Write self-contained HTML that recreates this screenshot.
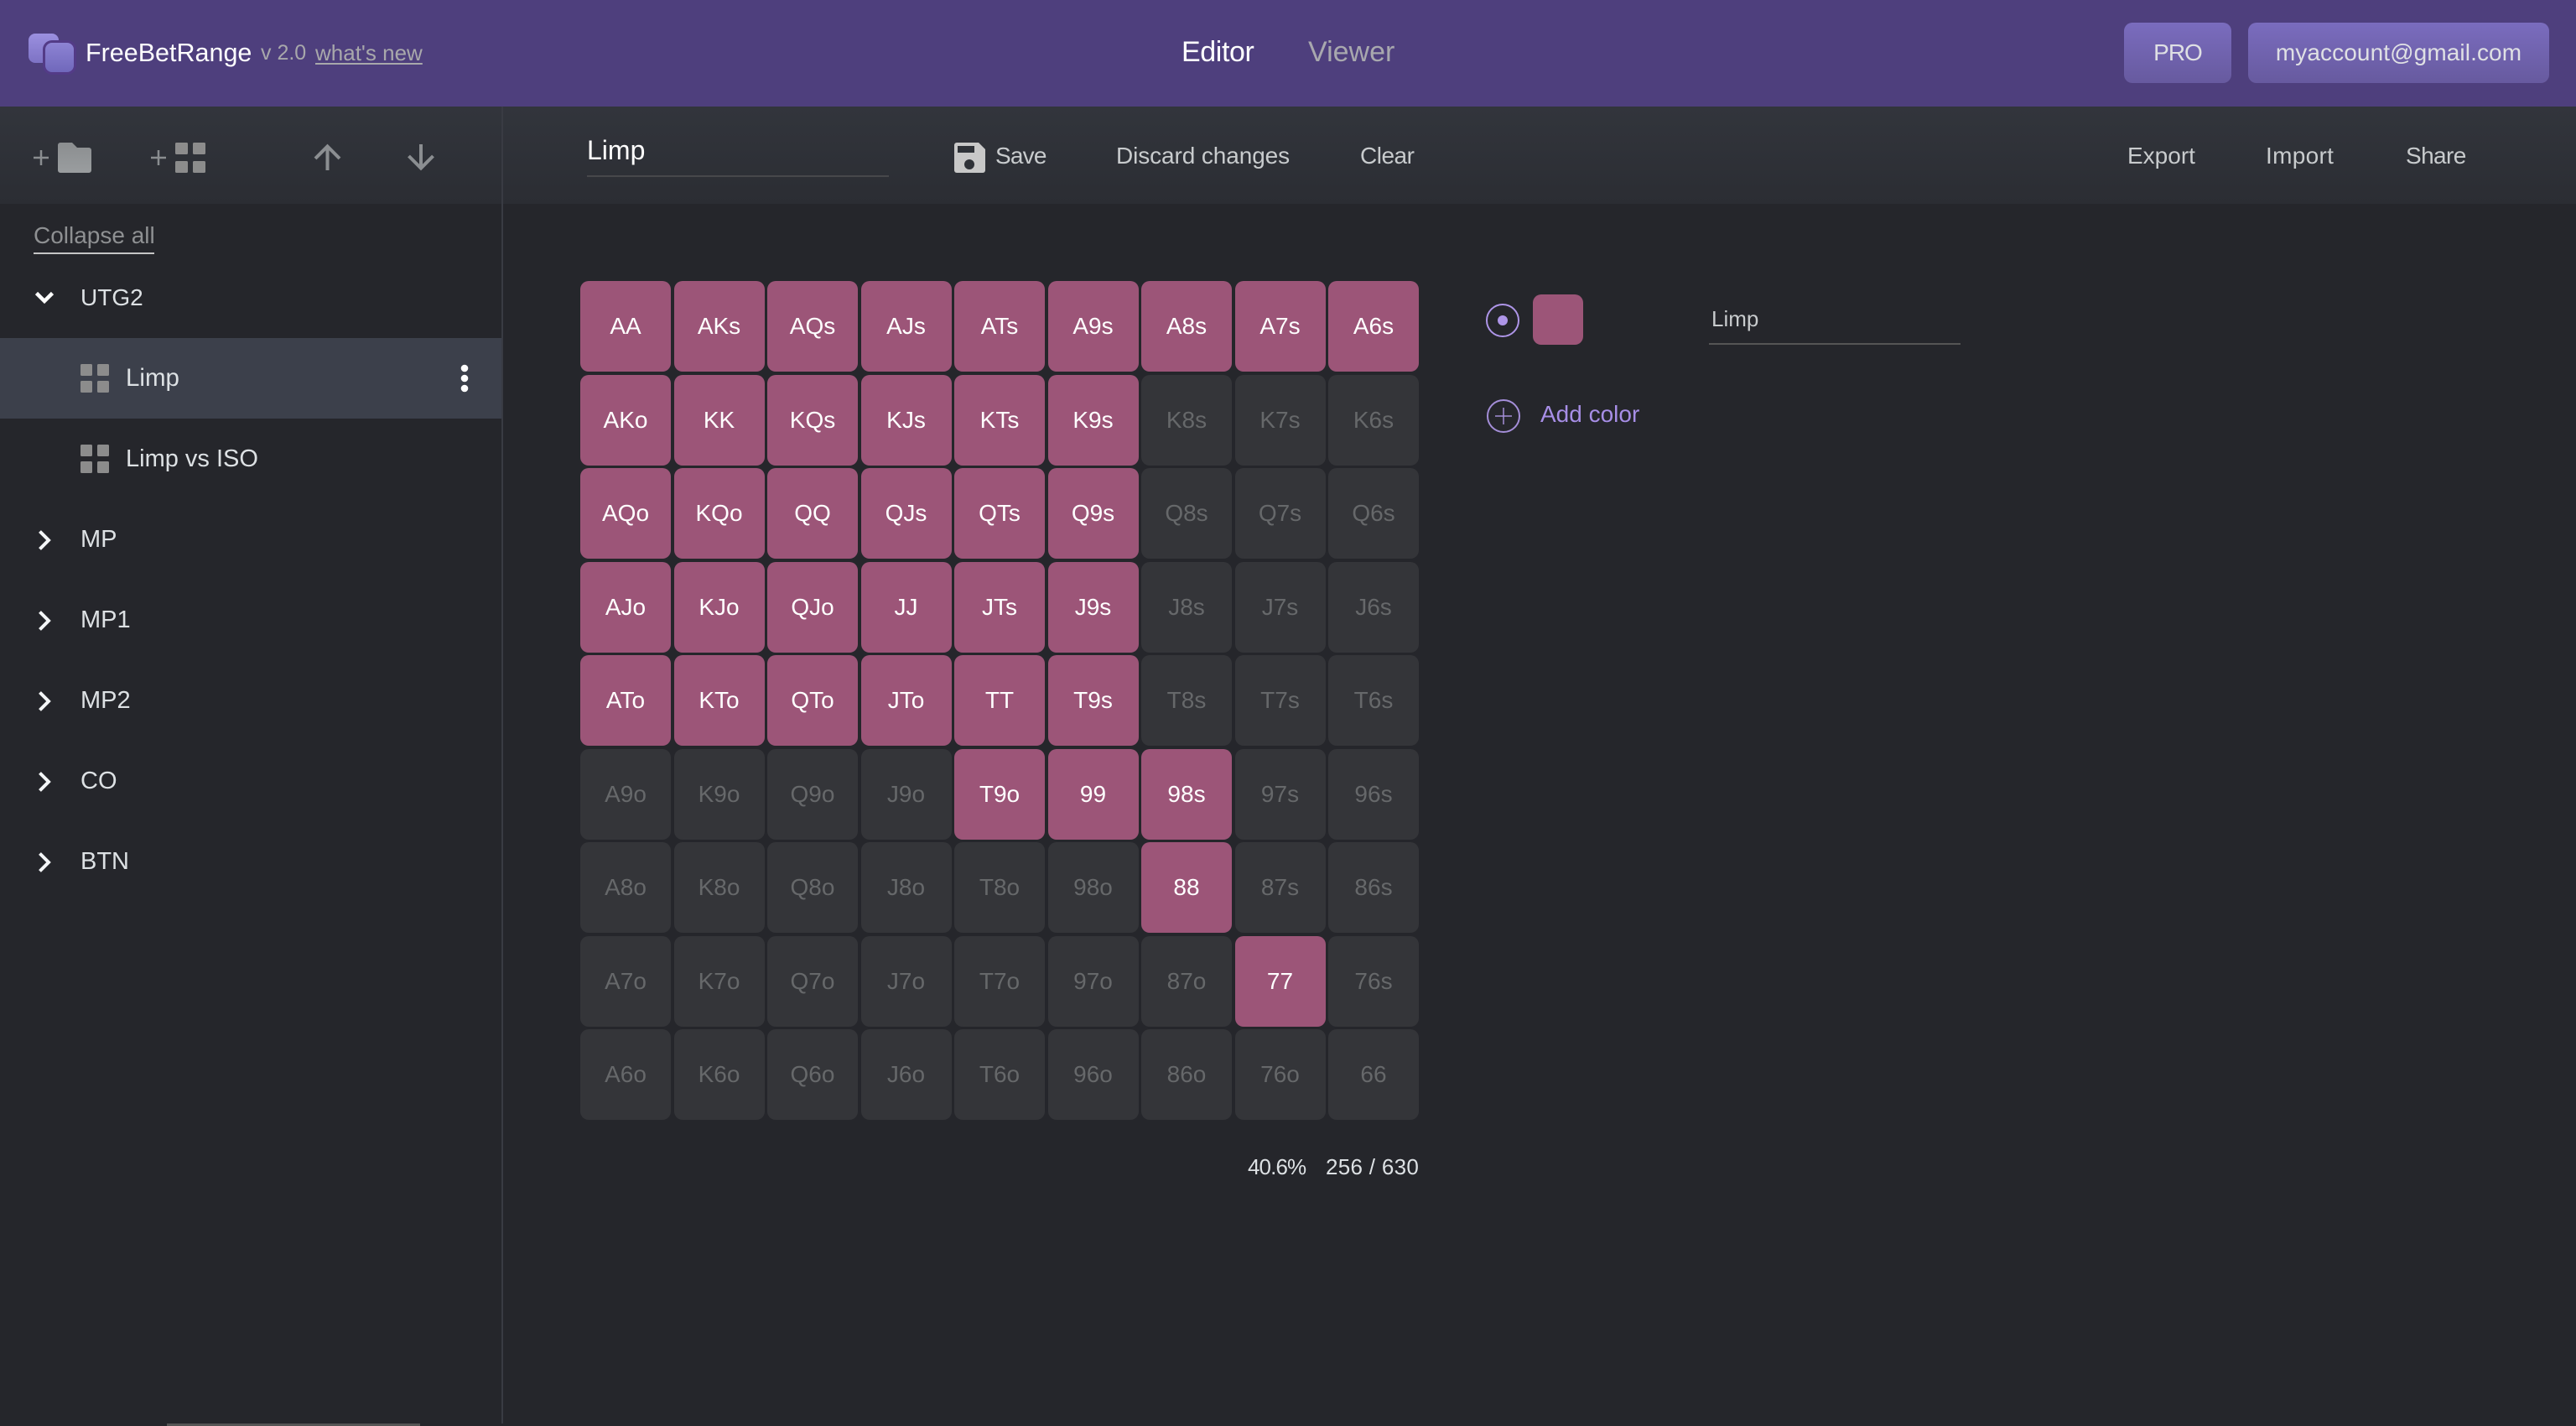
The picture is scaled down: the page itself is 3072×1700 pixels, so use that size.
<!DOCTYPE html>
<html lang="en"><head><meta charset="utf-8"><title>FreeBetRange</title>
<style>
html,body{margin:0;padding:0;width:3072px;height:1700px;overflow:hidden;background:#25262b}
body{position:relative;font-family:"Liberation Sans",sans-serif}
.b{position:absolute}
.t{position:absolute;white-space:nowrap;height:40px;line-height:40px;font-size:28px;color:#c8cbcd}
.s{color:#dde1e4;font-size:29px;left:96px}
.grid{position:absolute;left:692px;top:335px;display:grid;grid-template-columns:repeat(9,108px);grid-auto-rows:108px;column-gap:3.5px;row-gap:3.5px}
.grid div{background:#343539;color:#66686a;border-radius:10px;font-size:28px;line-height:108px;text-align:center}
.grid .p{background:#9c5578;color:#fff}
.btn{position:absolute;top:27px;height:72px;line-height:72px;border-radius:10px;background:linear-gradient(#7a6cbe,#675a9f);color:#dfe0e4;font-size:28px;text-align:center}
svg{position:absolute;left:0;top:0}
</style></head><body>
<div class="b" style="left:0;top:0;width:3072px;height:127px;background:#4e3f7d"></div>
<div class="b" style="left:0;top:127px;width:3072px;height:116px;background:linear-gradient(#32353c,#2b2d33)"></div>
<div class="b" style="left:598px;top:127px;width:2px;height:1570px;background:#393b43"></div>
<div class="b" style="left:0;top:403px;width:598px;height:96px;background:#3c404b"></div>
<div class="b" style="left:199px;top:1697px;width:302px;height:3px;background:#555"></div>

<svg width="3072" height="1700" viewBox="0 0 3072 1700" fill="none">
<defs>
<linearGradient id="l1" x1="0" y1="0" x2="0" y2="1"><stop offset="0" stop-color="#9b90e0"/><stop offset="1" stop-color="#7d72c4"/></linearGradient>
<linearGradient id="l2" x1="0" y1="0" x2="0" y2="1"><stop offset="0" stop-color="#8d83d4"/><stop offset="1" stop-color="#7068bb"/></linearGradient>
<linearGradient id="f" x1="0" y1="0" x2="0" y2="1"><stop offset="0" stop-color="#8b8e90"/><stop offset="1" stop-color="#9a9d9f"/></linearGradient>
</defs>
<rect x="34" y="40" width="36" height="35" rx="8" fill="url(#l1)"/>
<rect x="51" y="48" width="40" height="41" rx="11" fill="#533b87"/>
<rect x="54" y="51" width="34" height="35" rx="8" fill="url(#l2)"/>
<path d="M40 188h18M49 179v18M180 188h18M189 179v18" stroke="#8a8d90" stroke-width="2.500"/>
<path d="M72 170h14l6 6h14a3 3 0 0 1 3 3v24a3 3 0 0 1-3 3H72a3 3 0 0 1-3-3V173a3 3 0 0 1 3-3z" fill="url(#f)"/>
<g fill="#8c8c8c"><rect x="209" y="170" width="15" height="14" rx="1.500"/><rect x="230" y="170" width="15" height="14" rx="1.500"/><rect x="209" y="192" width="15" height="14" rx="1.500"/><rect x="230" y="192" width="15" height="14" rx="1.500"/>
<rect x="96" y="434" width="14" height="14" rx="1.500"/><rect x="116" y="434" width="14" height="14" rx="1.500"/><rect x="96" y="454" width="14" height="14" rx="1.500"/><rect x="116" y="454" width="14" height="14" rx="1.500"/>
<rect x="96" y="530" width="14" height="14" rx="1.500"/><rect x="116" y="530" width="14" height="14" rx="1.500"/><rect x="96" y="550" width="14" height="14" rx="1.500"/><rect x="116" y="550" width="14" height="14" rx="1.500"/></g>
<path d="M390.500 203V176M376 189L390.500 174.500L405 189M502 172V199M487.500 186L502 200.500L516.500 186" stroke="#8b8e91" stroke-width="4"/>
<path d="M1141 170h26l8 8v25a3 3 0 0 1-3 3h-31a3 3 0 0 1-3-3V173a3 3 0 0 1 3-3z" fill="#c8c8c8"/>
<rect x="1142" y="174" width="20" height="8" fill="#2f3238"/><circle cx="1156" cy="196" r="6" fill="#2f3238"/>
<path d="M43.500 349.500L53 359L62.500 349.500" stroke="#fff" stroke-width="4.500"/>
<path d="M47.500 633.500L58 644L47.500 654.500M47.500 729.500L58 740L47.500 750.500M47.500 825.500L58 836L47.500 846.500M47.500 921.500L58 932L47.500 942.500M47.500 1017.500L58 1028L47.500 1038.500" stroke="#f4f6f8" stroke-width="4"/>
<g fill="#fff"><circle cx="554" cy="439" r="4.300"/><circle cx="554" cy="451" r="4.300"/><circle cx="554" cy="463" r="4.300"/></g>
<circle cx="1792" cy="382" r="19" stroke="#ae95e8" stroke-width="2"/><circle cx="1792" cy="382" r="6" fill="#ae95e8"/>
<circle cx="1793" cy="496" r="19" stroke="#a48ed8" stroke-width="2"/><path d="M1783 496h20M1793 486v20" stroke="#a48ed8" stroke-width="1.500"/>
</svg>

<span class="t" style="left:102px;top:43px;font-size:30.500px;color:#fff">FreeBetRange</span>
<span class="t" style="left:311px;top:43px;font-size:25px;color:#a8a8ab">v 2.0</span>
<span class="t" style="left:376px;top:43px;font-size:26px;color:#a8a8ab;text-decoration:underline;text-underline-offset:3px">what's new</span>
<span class="t" style="left:1409px;top:42px;font-size:34px;color:#fff;letter-spacing:-.4px">Editor</span>
<span class="t" style="left:1560px;top:42px;font-size:34px;color:#a8a8ae">Viewer</span>
<div class="btn" style="left:2533px;width:128px;letter-spacing:-1px">PRO</div>
<div class="btn" style="left:2681px;width:359px;letter-spacing:.1px">myaccount@gmail.com</div>

<span class="t" style="left:700px;top:159px;font-size:32px;color:#fff">Limp</span>
<div class="b" style="left:700px;top:209px;width:360px;height:2px;background:#47484b"></div>
<span class="t" style="left:1187px;top:166px;letter-spacing:-.8px">Save</span>
<span class="t" style="left:1331px;top:166px;letter-spacing:-.1px">Discard changes</span>
<span class="t" style="left:1622px;top:166px;letter-spacing:-.5px">Clear</span>
<span class="t" style="left:2537px;top:166px">Export</span>
<span class="t" style="left:2702px;top:166px;letter-spacing:.3px">Import</span>
<span class="t" style="left:2869px;top:166px;letter-spacing:-.6px">Share</span>

<span class="t" style="left:40px;top:261px;color:#8e9092">Collapse all</span>
<div class="b" style="left:40px;top:301px;width:144px;height:2px;background:#c5c5c5"></div>
<span class="t s" style="top:335px;font-size:28px">UTG2</span>
<span class="t s" style="left:150px;top:431px;font-size:29.500px">Limp</span>
<span class="t s" style="left:150px;top:527px">Limp vs ISO</span>
<span class="t s" style="top:623px">MP</span>
<span class="t s" style="top:719px">MP1</span>
<span class="t s" style="top:815px">MP2</span>
<span class="t s" style="top:911px">CO</span>
<span class="t s" style="top:1007px">BTN</span>

<div class="grid">
<div class="p">AA</div><div class="p">AKs</div><div class="p">AQs</div><div class="p">AJs</div><div class="p">ATs</div><div class="p">A9s</div><div class="p">A8s</div><div class="p">A7s</div><div class="p">A6s</div>
<div class="p">AKo</div><div class="p">KK</div><div class="p">KQs</div><div class="p">KJs</div><div class="p">KTs</div><div class="p">K9s</div><div>K8s</div><div>K7s</div><div>K6s</div>
<div class="p">AQo</div><div class="p">KQo</div><div class="p">QQ</div><div class="p">QJs</div><div class="p">QTs</div><div class="p">Q9s</div><div>Q8s</div><div>Q7s</div><div>Q6s</div>
<div class="p">AJo</div><div class="p">KJo</div><div class="p">QJo</div><div class="p">JJ</div><div class="p">JTs</div><div class="p">J9s</div><div>J8s</div><div>J7s</div><div>J6s</div>
<div class="p">ATo</div><div class="p">KTo</div><div class="p">QTo</div><div class="p">JTo</div><div class="p">TT</div><div class="p">T9s</div><div>T8s</div><div>T7s</div><div>T6s</div>
<div>A9o</div><div>K9o</div><div>Q9o</div><div>J9o</div><div class="p">T9o</div><div class="p">99</div><div class="p">98s</div><div>97s</div><div>96s</div>
<div>A8o</div><div>K8o</div><div>Q8o</div><div>J8o</div><div>T8o</div><div>98o</div><div class="p">88</div><div>87s</div><div>86s</div>
<div>A7o</div><div>K7o</div><div>Q7o</div><div>J7o</div><div>T7o</div><div>97o</div><div>87o</div><div class="p">77</div><div>76s</div>
<div>A6o</div><div>K6o</div><div>Q6o</div><div>J6o</div><div>T6o</div><div>96o</div><div>86o</div><div>76o</div><div>66</div>
</div>

<span class="t" style="left:1488px;top:1371px;font-size:26px;color:#dde1e4;letter-spacing:-.9px">40.6%</span>
<span class="t" style="left:1581px;top:1371px;font-size:26px;color:#dde1e4;letter-spacing:.3px">256 / 630</span>

<div class="b" style="left:1828px;top:351px;width:60px;height:60px;border-radius:10px;background:#9c5578"></div>
<span class="t" style="left:2041px;top:360px;font-size:26px">Limp</span>
<div class="b" style="left:2038px;top:409px;width:300px;height:2px;background:#555"></div>
<span class="t" style="left:1837px;top:474px;color:#a78ee6">Add color</span>
</body></html>
